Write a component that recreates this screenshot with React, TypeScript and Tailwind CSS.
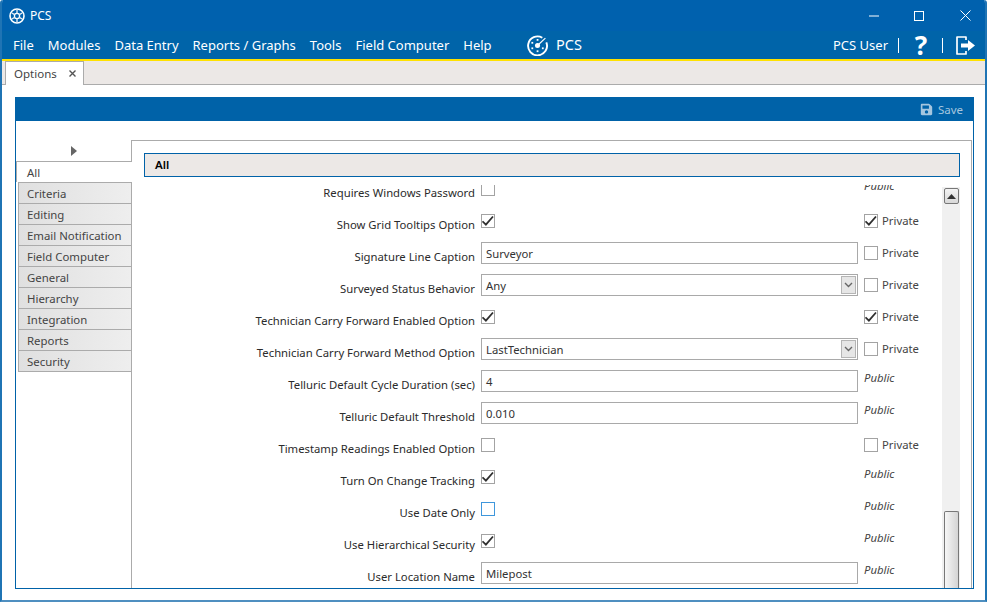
import React from "react";
import { FaSave } from "react-icons/fa";

const font = "font-['Noto_Sans','Open_Sans',sans-serif]";

type Row = {
  label: string;
  kind: "check" | "text" | "select";
  value?: string;
  checked?: boolean;
  focus?: boolean;
  vis: "public" | "private" | "private-on";
};

const rows: Row[] = [
  { label: "Requires Windows Password", kind: "check", vis: "public" },
  { label: "Show Grid Tooltips Option", kind: "check", checked: true, vis: "private-on" },
  { label: "Signature Line Caption", kind: "text", value: "Surveyor", vis: "private" },
  { label: "Surveyed Status Behavior", kind: "select", value: "Any", vis: "private" },
  { label: "Technician Carry Forward Enabled Option", kind: "check", checked: true, vis: "private-on" },
  { label: "Technician Carry Forward Method Option", kind: "select", value: "LastTechnician", vis: "private" },
  { label: "Telluric Default Cycle Duration (sec)", kind: "text", value: "4", vis: "public" },
  { label: "Telluric Default Threshold", kind: "text", value: "0.010", vis: "public" },
  { label: "Timestamp Readings Enabled Option", kind: "check", vis: "private" },
  { label: "Turn On Change Tracking", kind: "check", checked: true, vis: "public" },
  { label: "Use Date Only", kind: "check", focus: true, vis: "public" },
  { label: "Use Hierarchical Security", kind: "check", checked: true, vis: "public" },
  { label: "User Location Name", kind: "text", value: "Milepost", vis: "public" },
];

const navItems = ["Criteria", "Editing", "Email Notification", "Field Computer", "General", "Hierarchy", "Integration", "Reports"];
const menus = ["File", "Modules", "Data Entry", "Reports / Graphs", "Tools", "Field Computer", "Help"];

function Check({ checked, focus }: { checked?: boolean; focus?: boolean }) {
  return (
    <span className={`flex h-[14px] w-[14px] shrink-0 items-center justify-center border bg-white ${focus ? "border-[#3f97dc]" : "border-[#a3a3a3]"}`}>
      {checked && (
        <svg width="12" height="12" viewBox="0 0 12 12">
          <path d="M0.5 6.3 L3.9 9.7 L11 1.5" fill="none" stroke="#2f2f2f" strokeWidth="1.8" />
        </svg>
      )}
    </span>
  );
}

function WheelLogo() {
  return (
    <svg width="16" height="16" viewBox="0 0 16 16" fill="none">
      <circle cx="8" cy="8" r="7" stroke="#fff" strokeWidth="1.6" />
      <circle cx="8" cy="8" r="2.6" stroke="#fff" strokeWidth="1.3" />
      <path d="M8 2 V5.4 M8 10.6 V14 M2.8 5 L5.7 6.7 M10.3 9.3 L13.2 11 M2.8 11 L5.7 9.3 M10.3 6.7 L13.2 5" stroke="#dfeaf4" strokeWidth="1.4" />
    </svg>
  );
}

function DialLogo() {
  return (
    <svg width="21" height="21" viewBox="0 0 20 20" fill="none">
      <path d="M14.6 2.6 A9 9 0 1 0 18.4 7" stroke="#fff" strokeWidth="1.8" />
      <path d="M10.5 9.5 L17.5 3" stroke="#fff" strokeWidth="1.1" />
      <circle cx="10" cy="10" r="2.4" fill="#fff" />
      <rect x="9.2" y="3.8" width="1.7" height="1.7" fill="#fff" />
      <rect x="4.2" y="6.6" width="1.7" height="1.7" fill="#fff" />
      <rect x="4.2" y="11.8" width="1.7" height="1.7" fill="#fff" />
      <rect x="9.2" y="14.6" width="1.7" height="1.7" fill="#fff" />
      <rect x="14.2" y="11.8" width="1.7" height="1.7" fill="#fff" />
    </svg>
  );
}

function OptionRow({ r }: { r: Row }) {
  return (
    <div className="flex h-[32px] shrink-0">
      <div className="w-[331px] shrink-0 pt-[6px] text-right text-[11.3px] leading-[18px] text-[#2b2b2b]">{r.label}</div>
      <div className="ml-[6px] w-[377px] shrink-0">
        {r.kind === "check" && (
          <div className="pt-[4px]">
            <Check checked={r.checked} focus={r.focus} />
          </div>
        )}
        {r.kind === "text" && (
          <div className="flex h-[22px] items-center border border-[#a9a9a9] bg-white pl-[4px] pt-[2px] text-[11.3px] text-[#333]">{r.value}</div>
        )}
        {r.kind === "select" && (
          <div className="flex h-[22px] items-center justify-between border border-[#a9a9a9] bg-white pl-[4px] pr-px text-[11.3px] text-[#333]">
            <span className="pt-[2px]">{r.value}</span>
            <span className="flex h-[18px] w-[15px] items-center justify-center border border-[#b5b5b5] bg-[#e6e6e6]">
              <svg width="9" height="6" viewBox="0 0 9 6">
                <path d="M1 1 L4.5 4.5 L8 1" fill="none" stroke="#666" strokeWidth="1.4" />
              </svg>
            </span>
          </div>
        )}
      </div>
      <div className="ml-[6px] flex-1">
        {r.vis === "public" ? (
          <div className="text-[11.3px] italic leading-[16px] text-[#444]">Public</div>
        ) : (
          <div className="flex items-center gap-[4px] pt-[4px] text-[11.3px] leading-[14px] text-[#444]">
            <Check checked={r.vis === "private-on"} />
            <span className="-mt-[1px]">Private</span>
          </div>
        )}
      </div>
    </div>
  );
}

export default function App() {
  return (
    <div className={`h-[603px] w-[989px] overflow-hidden bg-white ${font}`}>
      <div className="flex h-[602px] w-[987px] flex-col overflow-hidden rounded-t-[3px] border-x-2 border-b-2 border-x-[#1f74b4] border-b-[#4f8fc0] bg-white">
        {/* title bar */}
        <div className="-mx-[2px] flex h-[31px] shrink-0 items-center bg-[#0061ae] pl-[9px] text-white">
          <WheelLogo />
          <span className="ml-[5px] text-[12px]">PCS</span>
          <div className="ml-auto flex items-center pr-[16px]">
            <svg width="10" height="10" viewBox="0 0 10 10" className="mr-[35px]">
              <path d="M0 5 H10" stroke="#fff" strokeWidth="1" />
            </svg>
            <svg width="10" height="10" viewBox="0 0 10 10" className="mr-[36px]">
              <rect x="0.5" y="0.5" width="9" height="9" fill="none" stroke="#fff" />
            </svg>
            <svg width="11" height="11" viewBox="0 0 11 11">
              <path d="M0.5 0.5 L10.5 10.5 M10.5 0.5 L0.5 10.5" stroke="#fff" />
            </svg>
          </div>
        </div>
        {/* menu bar */}
        <div className="-mx-[2px] flex h-[28px] shrink-0 items-center bg-[#0064a9] pl-[13px] text-[13px] text-white">
          <div className="flex w-[514px] gap-[14px] pt-[2px]">
            {menus.map((m) => (
              <span key={m}>{m}</span>
            ))}
          </div>
          <DialLogo />
          <span className="ml-[8px] text-[14.5px]">PCS</span>
          <div className="ml-auto flex items-center pr-[11px]">
            <span className="pt-[2px] text-[13px]">PCS User</span>
            <span className="ml-[10px] h-[15px] w-px bg-white" />
            <span className="ml-[15px] w-[14px] text-center text-[26px] font-bold leading-[28px]">?</span>
            <span className="ml-[14px] h-[15px] w-px bg-white" />
            <svg width="21" height="21" viewBox="0 0 21 21" className="ml-[12px]" fill="none">
              <path d="M11 5 V2 H2 V19 H11 V16" stroke="#fff" strokeWidth="1.7" strokeLinejoin="round" />
              <path d="M6 8.5 H13 V5 L20 10.5 L13 16 V12.5 H6 Z" fill="#fff" />
            </svg>
          </div>
        </div>
        <div className="-mx-[2px] h-[2px] shrink-0 bg-[#ffe100]" />
        {/* tab strip */}
        <div className="flex h-[24px] shrink-0 border-b border-[#ababab] bg-[#ece8e6] pl-[3px]">
          <div className="flex h-[24px] w-[79px] items-center border-x border-t border-[#ababab] bg-white pl-[8px] text-[11.5px] text-[#444]">
            Options
            <svg width="7" height="7" viewBox="0 0 7 7" className="ml-[12px]">
              <path d="M0.5 0.5 L6.5 6.5 M6.5 0.5 L0.5 6.5" stroke="#555" strokeWidth="1.4" />
            </svg>
          </div>
        </div>
        {/* panel */}
        <div className="ml-[13px] mt-[12px] flex h-[492px] w-[959px] flex-col border-x border-b border-[#0062a8]">
          <div className="-mx-px flex h-[24px] shrink-0 items-center justify-end bg-[#0062a8] pr-[11px] text-[11.5px] text-[#a5c6df]">
            <FaSave size={13} color="#a5c6df" />
            <span className="ml-[5px] pt-px">Save</span>
          </div>
          <div className="flex min-h-0 flex-1">
            {/* nav */}
            <div className="w-[115px] shrink-0 text-[11.4px] text-[#444]">
              <div className="flex h-[40px] items-end justify-center pb-[5px]">
                <svg width="6" height="10" viewBox="0 0 6 10">
                  <path d="M0 0 L6 5 L0 10 Z" fill="#666" />
                </svg>
              </div>
              <div className="relative z-10 flex h-[21px] w-[116px] items-center border-l border-t border-[#ababab] bg-white pl-[10px] pt-[2px]">All</div>
              {navItems.map((n) => (
                <div key={n} className="ml-[2px] flex h-[21px] items-center border-l border-t border-[#ababab] bg-gradient-to-r from-[#e0e0e0] to-[#eeeeee] pl-[8px] pt-[1px]">
                  {n}
                </div>
              ))}
              <div className="ml-[2px] flex h-[22px] items-center border-y border-l border-[#ababab] bg-gradient-to-r from-[#e0e0e0] to-[#eeeeee] pl-[8px] pt-[1px]">
                Security
              </div>
            </div>
            {/* content */}
            <div className="mr-px mt-[19px] flex min-h-0 min-w-0 flex-1 flex-col border-x border-t border-[#ababab] pl-[12px] pr-[11px] pt-[12px]">
              <div className="flex h-[24px] shrink-0 items-center border border-[#0062a8] bg-[#ece8e6] pl-[10px] text-[11.5px] font-semibold text-black">
                All
              </div>
              <div className="mt-[8px] flex min-h-0 flex-1">
                <div className="min-w-0 flex-1 overflow-hidden">
                  <div className="-mt-[7px]">
                    {rows.map((r) => (
                      <OptionRow key={r.label} r={r} />
                    ))}
                  </div>
                </div>
                <div className="mt-[2px] flex w-[18px] shrink-0 flex-col items-center justify-between bg-[#f0f0f0] pt-px">
                  <div className="flex h-[16px] w-[15px] items-center justify-center rounded-[2px] border border-[#777] bg-gradient-to-b from-[#f4f4f4] to-[#d8d8d8]">
                    <svg width="9" height="5" viewBox="0 0 9 5">
                      <path d="M0 5 L4.5 0 L9 5 Z" fill="#333" />
                    </svg>
                  </div>
                  <div className="h-[77px] w-[15px] rounded-t-[2px] border-x border-t border-[#777] bg-gradient-to-r from-[#f6f6f6] to-[#d4d4d4]" />
                </div>
              </div>
            </div>
          </div>
        </div>
      </div>
    </div>
  );
}
